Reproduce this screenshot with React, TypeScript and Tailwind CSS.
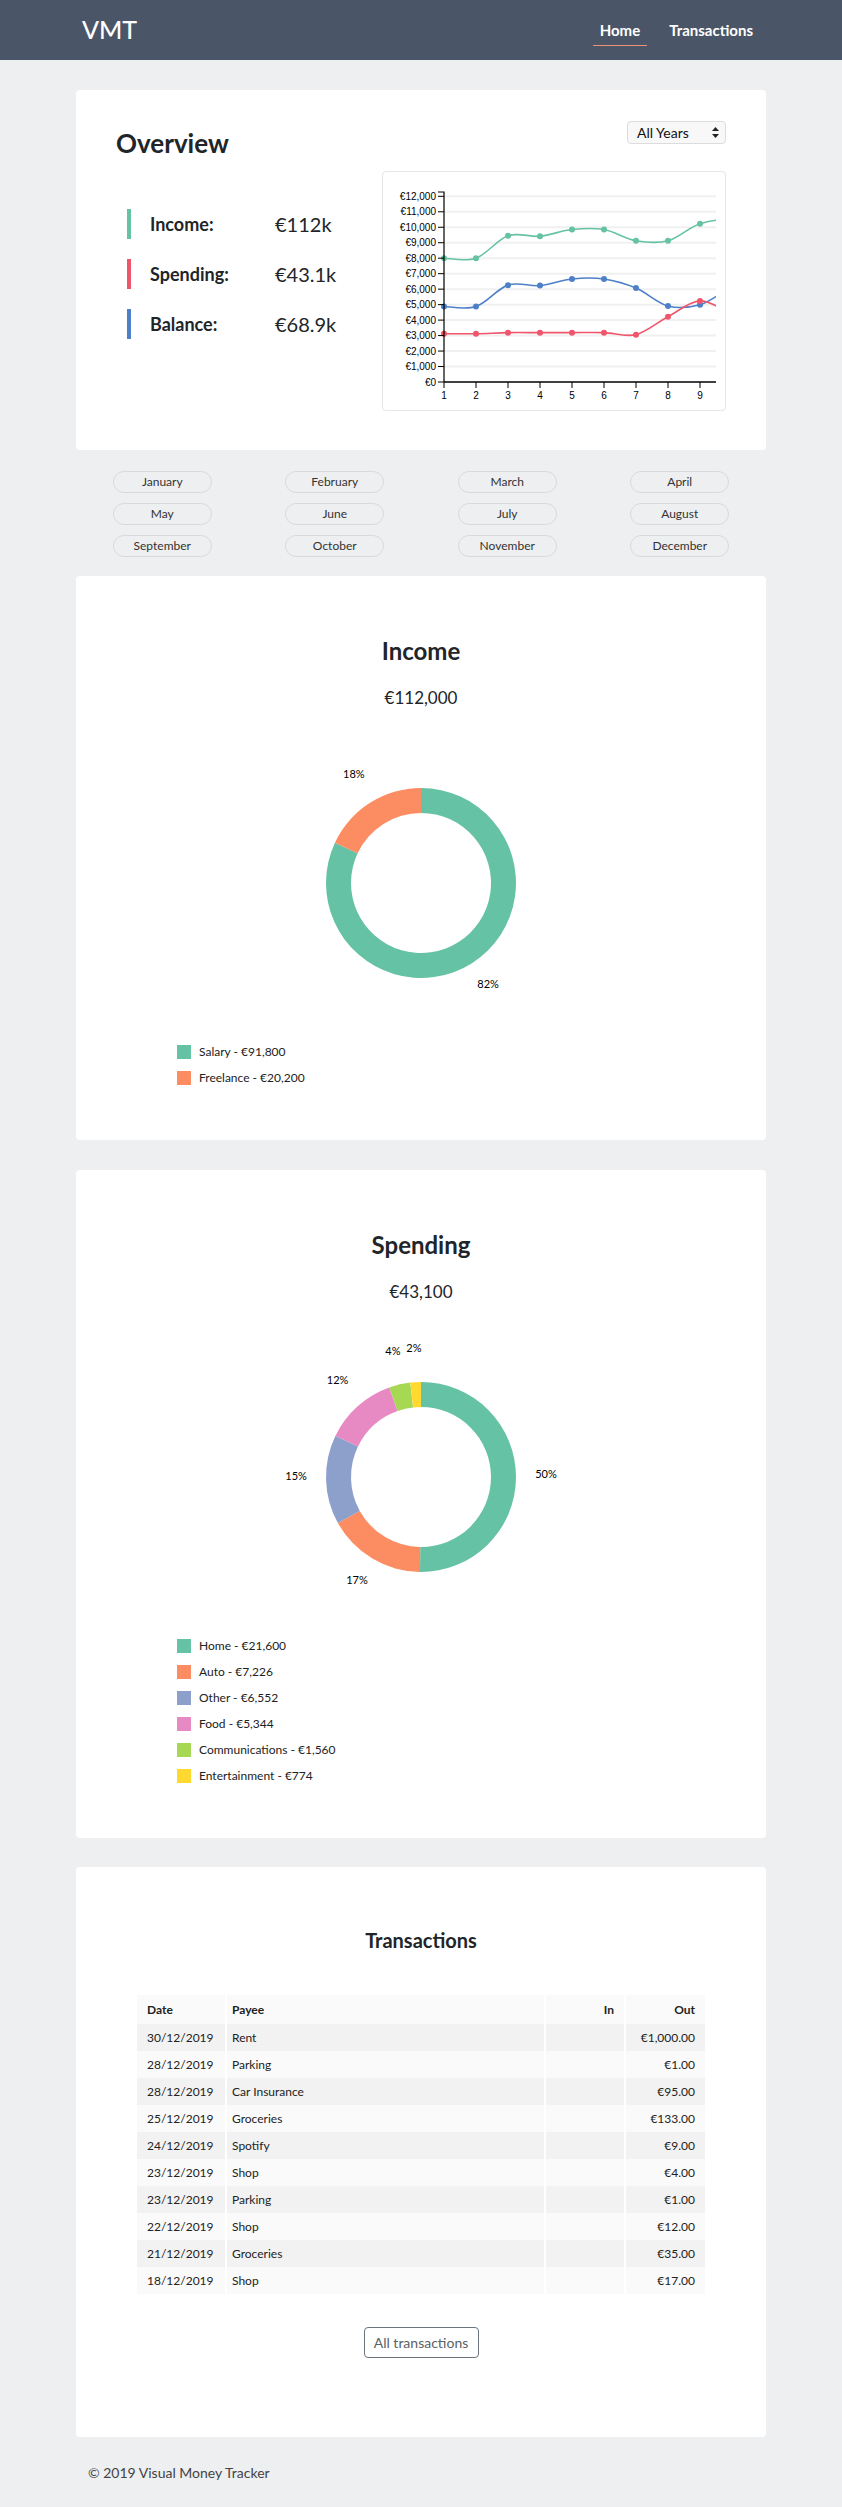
import React from "react";

const FONT = "font-['Lato','Noto_Sans',sans-serif]";

const INCOME = [8000, 8000, 9450, 9420, 9850, 9850, 9130, 9130, 10230, 10400, 9300, 9200];
const SPEND = [3120, 3120, 3190, 3190, 3190, 3190, 3060, 4220, 5240, 4400, 3600, 3580];
const BALANCE = INCOME.map((v, i) => v - SPEND[i]);

const MONTHS = [
  "January", "February", "March", "April", "May", "June",
  "July", "August", "September", "October", "November", "December",
];

const TRANSACTIONS = [
  ["30/12/2019", "Rent", "€1,000.00"],
  ["28/12/2019", "Parking", "€1.00"],
  ["28/12/2019", "Car Insurance", "€95.00"],
  ["25/12/2019", "Groceries", "€133.00"],
  ["24/12/2019", "Spotify", "€9.00"],
  ["23/12/2019", "Shop", "€4.00"],
  ["23/12/2019", "Parking", "€1.00"],
  ["22/12/2019", "Shop", "€12.00"],
  ["21/12/2019", "Groceries", "€35.00"],
  ["18/12/2019", "Shop", "€17.00"],
];

type Slice = { label: string; value: number; color: string };

const INCOME_SLICES: Slice[] = [
  { label: "Salary - €91,800", value: 91800, color: "#66c2a5" },
  { label: "Freelance - €20,200", value: 20200, color: "#fc8d62" },
];

const SPEND_SLICES: Slice[] = [
  { label: "Home - €21,600", value: 21600, color: "#66c2a5" },
  { label: "Auto - €7,226", value: 7226, color: "#fc8d62" },
  { label: "Other - €6,552", value: 6552, color: "#8da0cb" },
  { label: "Food - €5,344", value: 5344, color: "#e78ac3" },
  { label: "Communications - €1,560", value: 1560, color: "#a6d854" },
  { label: "Entertainment - €774", value: 774, color: "#ffd92f" },
];

// chart geometry, local to the 344x240 box
const X0 = 61;
const STEP = 32;
const Y0 = 210;
const PER = 185.7 / 12000;
const px = (i: number) => X0 + i * STEP;
const py = (v: number) => Y0 - v * PER;

function cardinal(vals: number[]) {
  const pts = vals.map((v, i) => [px(i), py(v)]);
  let d = `M${pts[0][0]},${pts[0][1]}`;
  for (let i = 0; i < pts.length - 1; i++) {
    const p0 = pts[i - 1] ?? pts[i];
    const p1 = pts[i];
    const p2 = pts[i + 1];
    const p3 = pts[i + 2] ?? p2;
    const c1x = p1[0] + (p2[0] - p0[0]) / 6;
    const c1y = p1[1] + (p2[1] - p0[1]) / 6;
    const c2x = p2[0] - (p3[0] - p1[0]) / 6;
    const c2y = p2[1] - (p3[1] - p1[1]) / 6;
    d += ` C${c1x},${c1y} ${c2x},${c2y} ${p2[0]},${p2[1]}`;
  }
  return d;
}

function LineChart() {
  const series = [
    { vals: INCOME, color: "#66c2a5" },
    { vals: BALANCE, color: "#4d80c9" },
    { vals: SPEND, color: "#f0566b" },
  ];
  return (
    <svg width="344" height="240" className="block font-['Liberation_Sans',Arial,sans-serif]">
      <defs>
        <clipPath id="plot">
          <rect x="0" y="0" width="333" height="240" />
        </clipPath>
      </defs>
      {Array.from({ length: 12 }, (_, k) => (
        <line key={k} x1={X0} x2={333} y1={py((k + 1) * 1000)} y2={py((k + 1) * 1000)} stroke="#f0f0f0" strokeWidth="2" />
      ))}
      <g clipPath="url(#plot)">
        {series.map((s) => (
          <g key={s.color}>
            <path d={cardinal(s.vals)} fill="none" stroke={s.color} strokeWidth="1.6" />
            {s.vals.map((v, i) => (
              <circle key={i} cx={px(i)} cy={py(v)} r="3" fill={s.color} />
            ))}
          </g>
        ))}
      </g>
      <path d={`M55,20 H${X0} V${Y0}`} fill="none" stroke="#000" strokeWidth="1.2" />
      <line x1={X0} x2={333} y1={Y0} y2={Y0} stroke="#000" strokeWidth="1.5" />
      {Array.from({ length: 13 }, (_, k) => (
        <g key={k}>
          <line x1={55} x2={X0} y1={py(k * 1000)} y2={py(k * 1000)} stroke="#000" />
          <text x={53} y={py(k * 1000) + 3.5} fontSize="10" textAnchor="end" fill="#000">
            €{k === 0 ? "0" : `${k},000`}
          </text>
        </g>
      ))}
      {Array.from({ length: 9 }, (_, i) => (
        <g key={i}>
          <line x1={px(i)} x2={px(i)} y1={Y0} y2={Y0 + 6} stroke="#000" />
          <text x={px(i)} y={Y0 + 17} fontSize="10" textAnchor="middle" fill="#000">
            {i + 1}
          </text>
        </g>
      ))}
    </svg>
  );
}

function polar(cx: number, cy: number, r: number, deg: number) {
  const a = (deg * Math.PI) / 180;
  return [cx + r * Math.sin(a), cy - r * Math.cos(a)];
}

function arc(cx: number, cy: number, r0: number, r1: number, a0: number, a1: number) {
  const large = a1 - a0 > 180 ? 1 : 0;
  const [x1, y1] = polar(cx, cy, r1, a0);
  const [x2, y2] = polar(cx, cy, r1, a1);
  const [x3, y3] = polar(cx, cy, r0, a1);
  const [x4, y4] = polar(cx, cy, r0, a0);
  return `M${x1},${y1} A${r1},${r1} 0 ${large} 1 ${x2},${y2} L${x3},${y3} A${r0},${r0} 0 ${large} 0 ${x4},${y4} Z`;
}

function Donut({ slices }: { slices: Slice[] }) {
  const total = slices.reduce((s, x) => s + x.value, 0);
  const cx = 170;
  const cy = 130;
  let acc = 0;
  return (
    <svg width="340" height="260" overflow="visible" className="block overflow-visible">
      {slices.map((s) => {
        const a0 = (acc / total) * 360;
        acc += s.value;
        const a1 = (acc / total) * 360;
        const [lx, ly] = polar(cx, cy, 125, (a0 + a1) / 2);
        return (
          <g key={s.label}>
            <path d={arc(cx, cy, 70, 95, a0, a1)} fill={s.color} />
            <text x={lx} y={ly} fontSize="11" textAnchor="middle" fill="#000">
              {Math.round((s.value / total) * 100)}%
            </text>
          </g>
        );
      })}
    </svg>
  );
}

function Legend({ slices }: { slices: Slice[] }) {
  return (
    <div className="mt-[26px] self-start pl-[101px]">
      {slices.map((s) => (
        <div key={s.label} className="flex h-[26px] items-center text-[12px] text-[#222]">
          <span className="mr-2 h-[14px] w-[14px]" style={{ backgroundColor: s.color }} />
          {s.label}
        </div>
      ))}
    </div>
  );
}

function BreakdownCard({ title, amount, slices }: { title: string; amount: string; slices: Slice[] }) {
  return (
    <section className="flex flex-col items-center rounded-[4px] bg-white pb-[49px] pt-[60px]">
      <h2 className="text-[24px] font-bold leading-[30px] text-[#212529]">{title}</h2>
      <p className="mt-[20px] text-[17px] leading-[24px] text-[#212529]">{amount}</p>
      <div className="mt-[43px]">
        <Donut slices={slices} />
      </div>
      <Legend slices={slices} />
    </section>
  );
}

function Stat({ label, value, color }: { label: string; value: string; color: string }) {
  return (
    <div className="flex h-[30px] items-center">
      <span className="ml-[11px] h-full w-[4px]" style={{ backgroundColor: color }} />
      <span className="ml-[19px] w-[125px] text-[18px] font-bold text-[#212529]">{label}</span>
      <span className="text-[20px] font-normal text-[#212529]">{value}</span>
    </div>
  );
}

export default function App() {
  return (
    <div className={`${FONT} min-h-screen bg-[#eeeff1] text-[#212529]`}>
      <header className="h-[60px] bg-[#4a5667]">
        <div className="mx-auto flex h-full w-[720px] items-center justify-between px-[15px]">
          <span className="ml-[6px] text-[25px] font-medium text-white">VMT</span>
          <nav className="mr-[6px] flex gap-[15px] text-[15px] font-bold text-white">
            <span className="relative px-[7px]">
              Home
              <span className="absolute -bottom-[5px] left-0 right-0 h-[1.5px] bg-[#ee9276]" />
            </span>
            <span className="px-[7px]">Transactions</span>
          </nav>
        </div>
      </header>

      <main className="mx-auto w-[720px] px-[15px] pt-[30px]">
        <section className="grid grid-cols-[1fr_344px] rounded-[4px] bg-white px-10 pb-[39px] pt-[31px]">
          <div>
            <h1 className="mt-[6px] text-[26px] font-bold leading-[32px]">Overview</h1>
            <div className="mt-[50px] flex flex-col gap-5">
              <Stat label="Income:" value="€112k" color="#66c2a5" />
              <Stat label="Spending:" value="€43.1k" color="#f0566b" />
              <Stat label="Balance:" value="€68.9k" color="#4d80c9" />
            </div>
          </div>
          <div className="flex flex-col items-end">
            <div className="flex h-[23px] w-[99px] items-center justify-between rounded-[4px] border border-[#dcdcdc] bg-[#f8f8f8] pl-[9px] pr-[6px] text-[14px] text-[#111]">
              All Years
              <svg width="7" height="11" viewBox="0 0 7 11">
                <path d="M3.5 0 L7 4 H0 Z M3.5 11 L0 7 H7 Z" fill="#222" />
              </svg>
            </div>
            <div className="mt-[27px] h-[240px] w-[344px] rounded-[4px] border border-[#e6e6e6]">
              <LineChart />
            </div>
          </div>
        </section>

        <div className="mt-[21px] grid grid-cols-4 gap-y-[10px]">
          {MONTHS.map((m) => (
            <div key={m} className="flex justify-center">
              <span className="flex h-[22px] w-[99px] items-center justify-center rounded-full border border-[#dadada] text-[12px] text-[#333]">
                {m}
              </span>
            </div>
          ))}
        </div>

        <div className="mt-[19px]">
          <BreakdownCard title="Income" amount="€112,000" slices={INCOME_SLICES} />
        </div>
        <div className="mt-[30px]">
          <BreakdownCard title="Spending" amount="€43,100" slices={SPEND_SLICES} />
        </div>

        <section className="mt-[29px] flex flex-col items-center rounded-[4px] bg-white pb-[79px] pt-[59px]">
          <h2 className="text-[20px] font-bold leading-[28px]">Transactions</h2>
          <table className="mt-[41px] w-[568px] table-fixed border-collapse text-[12px] text-[#222]">
            <colgroup>
              <col className="w-[89px]" />
              <col className="w-[319px]" />
              <col className="w-[80px]" />
              <col className="w-[80px]" />
            </colgroup>
            <thead>
              <tr className="h-[29px] bg-[#fafafa] font-bold">
                <th className="pl-[10px] text-left">Date</th>
                <th className="border-l-2 border-white pl-[5px] text-left">Payee</th>
                <th className="border-l-2 border-white pr-[10px] text-right">In</th>
                <th className="border-l-2 border-white pr-[10px] text-right">Out</th>
              </tr>
            </thead>
            <tbody>
              {TRANSACTIONS.map((t, i) => (
                <tr key={i} className={`h-[27px] ${i % 2 === 0 ? "bg-[#f2f2f2]" : "bg-[#fafafa]"}`}>
                  <td className="pl-[10px]">{t[0]}</td>
                  <td className="border-l-2 border-white pl-[5px]">{t[1]}</td>
                  <td className="border-l-2 border-white" />
                  <td className="border-l-2 border-white pr-[10px] text-right">{t[2]}</td>
                </tr>
              ))}
            </tbody>
          </table>
          <button className="mt-[33px] h-[31px] w-[115px] rounded-[4px] border border-[#6c757d] text-[14px] text-[#5a6268]">
            All transactions
          </button>
        </section>
      </main>

      <footer className="mx-auto flex h-[70px] w-[720px] items-center px-[15px]">
        <span className="ml-[12px] text-[14px] text-[#444]">© 2019 Visual Money Tracker</span>
      </footer>
    </div>
  );
}
